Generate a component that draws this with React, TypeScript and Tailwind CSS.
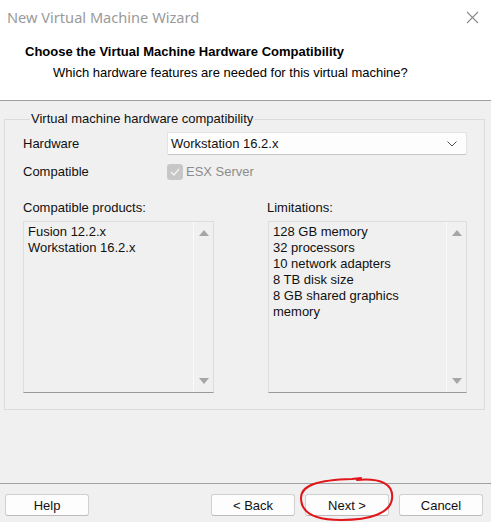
import React from "react";

function ScrollArrows() {
  return (
    <div className="w-[20px] shrink-0 border-l border-[#fafafa] flex flex-col items-center justify-between pt-[8px] pb-[8px]">
      <svg width="10" height="6" viewBox="0 0 10 6">
        <path d="M5 0 L10 6 L0 6 Z" fill="#a6a6a6" />
      </svg>
      <svg width="10" height="6" viewBox="0 0 10 6">
        <path d="M0 0 L10 0 L5 6 Z" fill="#a6a6a6" />
      </svg>
    </div>
  );
}

function ListBox({ items, width }: { items: string[]; width: string }) {
  return (
    <div className={`${width} h-[172px] flex border border-[#dddddd] border-b-[#9a9a9a] bg-[#f0f0f0]`}>
      <div className="flex-1 pl-[4px] pt-[2px] leading-[16px] text-[#111]">
        {items.map((t) => (
          <div key={t}>{t}</div>
        ))}
      </div>
      <ScrollArrows />
    </div>
  );
}

function Btn({ label }: { label: string }) {
  return (
    <button className="w-[84px] h-[22px] rounded-[3px] border border-[#d0d0d0] border-b-[#bcbcbc] bg-[#fdfdfd] text-[13px] text-[#111] leading-none flex items-center justify-center">
      {label}
    </button>
  );
}

export default function App() {
  return (
    <div
      className="relative w-[491px] h-[522px] bg-[#f0f0f0] text-[13px] text-[#111] overflow-hidden flex flex-col"
      style={{ fontFamily: '"Liberation Sans", Arial, sans-serif' }}
    >
      {/* Title bar */}
      <div className="h-[35px] bg-white flex items-center justify-between pl-[7px] pr-[12px] shrink-0">
        <span
          className="text-[14.6px] text-[#9a9a9a]"
          style={{ fontFamily: '"Noto Sans", "Open Sans", sans-serif' }}
        >
          New Virtual Machine Wizard
        </span>
        <svg width="13" height="13" viewBox="0 0 13 13">
          <path d="M1 1 L12 12 M12 1 L1 12" stroke="#8a8a8a" strokeWidth="1.1" />
        </svg>
      </div>

      {/* Header */}
      <div className="h-[65px] bg-white shrink-0 pt-[9px]">
        <div className="pl-[25px] font-bold leading-[16px] text-[#000]">
          Choose the Virtual Machine Hardware Compatibility
        </div>
        <div className="pl-[53px] pt-[5px] leading-[16px] text-[#000]">
          Which hardware features are needed for this virtual machine?
        </div>
      </div>
      <div className="h-px bg-[#a0a0a0] shrink-0" />

      {/* Body */}
      <div className="flex-1 px-[4px] pt-[10px]">
        <fieldset className="w-[481px] border border-[#dcdcdc] pl-[18px] pb-[16px]">
          <legend className="ml-[7px] px-[1px] leading-[16px] text-[#111]">
            Virtual machine hardware compatibility
          </legend>
          <div className="flex items-center mt-[5px]">
            <div className="w-[144px]">Hardware</div>
            <div className="w-[300px] h-[23px] bg-[#fdfdfd] border border-[#e2e2e2] border-b-[#c6c6c6] rounded-[2px] flex items-center justify-between pl-[3px] pr-[9px]">
              <span>Workstation 16.2.x</span>
              <svg width="10" height="6" viewBox="0 0 10 6">
                <path d="M0.5 0.5 L5 5 L9.5 0.5" stroke="#555" strokeWidth="1" fill="none" />
              </svg>
            </div>
          </div>
          <div className="flex items-center mt-[7px]">
            <div className="w-[144px]">Compatible</div>
            <div className="flex items-center gap-[3px] text-[#8c8c8c]">
              <div className="w-[16px] h-[16px] rounded-[3px] bg-[#c7c7c7] flex items-center justify-center">
                <svg width="10" height="8" viewBox="0 0 10 8">
                  <path d="M1 4 L4 7 L9 1" stroke="#f4f4f4" strokeWidth="1.2" fill="none" />
                </svg>
              </div>
              <span>ESX Server</span>
            </div>
          </div>
          <div className="flex mt-[18px]">
            <div className="w-[244px] flex flex-col">
              <div className="leading-[16px] mb-[5px]">Compatible products:</div>
              <ListBox width="w-[191px]" items={["Fusion 12.2.x", "Workstation 16.2.x"]} />
            </div>
            <div className="flex flex-col">
              <div className="leading-[16px] mb-[5px]">Limitations:</div>
              <div className="ml-[1px]">
                <ListBox
                  width="w-[199px]"
                  items={[
                    "128 GB memory",
                    "32 processors",
                    "10 network adapters",
                    "8 TB disk size",
                    "8 GB shared graphics",
                    "memory",
                  ]}
                />
              </div>
            </div>
          </div>
        </fieldset>
      </div>

      {/* Footer */}
      <div className="h-px bg-[#a0a0a0] shrink-0" />
      <div className="h-[38px] shrink-0 flex items-start pt-[10px] px-[5px] justify-between">
        <Btn label="Help" />
        <div className="flex gap-[10px] pr-[3px]">
          <Btn label="< Back" />
          <Btn label="Next >" />
          <Btn label="Cancel" />
        </div>
      </div>

      {/* Red annotation circle */}
      <svg
        className="absolute left-0 top-0 pointer-events-none"
        width="491"
        height="522"
        viewBox="0 0 491 522"
      >
        <path
          d="M357 480 C381 478 394 484 392 499 C390 513 371 520 341 520 C313 520 301 512 301 498 C301 485 318 480 352 479 L361 478"
          stroke="#e0161b"
          strokeWidth="2"
          fill="none"
          strokeLinecap="round"
        />
      </svg>
    </div>
  );
}
